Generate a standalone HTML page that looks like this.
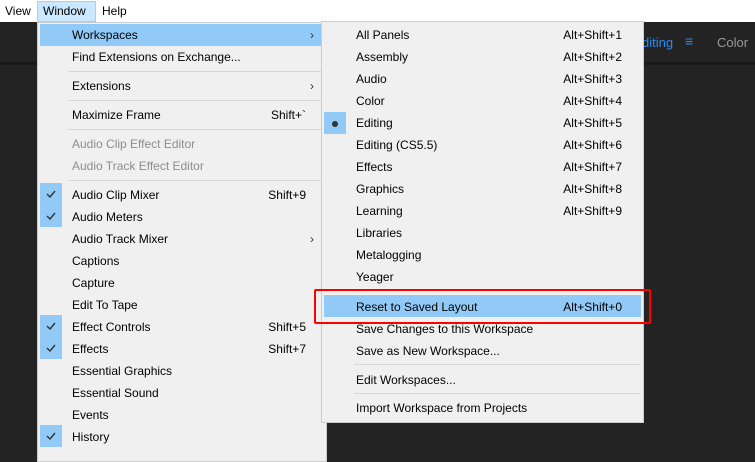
<!DOCTYPE html>
<html><head><style>
*{margin:0;padding:0;box-sizing:border-box}
body{width:755px;height:450px;overflow:hidden;background:#232323;position:relative;font-family:"Liberation Sans",sans-serif;font-size:12px;color:#000}
.bar{position:absolute;left:0;top:0;width:755px;height:22px;background:#fff}
.bar span{position:absolute;top:4px}
.win{position:absolute;left:37px;top:1px;width:59px;height:21px;background:#cce8ff;border:1px solid #99d1ff}
.line{position:absolute;left:0;top:62px;width:755px;height:3px;background:#191919}
.menu{position:absolute;background:#f0f0f0;border:1px solid #ccc}
.it{position:absolute;height:22px;line-height:22px;white-space:nowrap}
.hl{position:absolute;background:#91c9f7}
.sep{position:absolute;height:1px;background:#d7d7d7}
.dis{color:#8d8d8d}
.sc{position:absolute;text-align:right;height:22px;line-height:22px}
.arr{position:absolute;font-size:12px;color:#333}
.chk{position:absolute;left:2px;width:22px;height:22px;background:#91c9f7}
.chk svg{position:absolute;left:6px;top:7px}
</style></head><body>
<div class="bar">
<div class="win"></div>
<span style="left:5px">View</span>
<span style="left:43px">Window</span>
<span style="left:102px">Help</span>
</div>
<div class="line"></div>
<div style="position:absolute;left:642px;top:35px;color:#2d8ceb;font-size:13px">diting</div>
<div style="position:absolute;left:685px;top:33px;color:#2d8ceb;font-size:14px">≡</div>
<div style="position:absolute;left:717px;top:35px;color:#9a9a9a;font-size:13px">Color</div>

<div class="menu" style="left:37px;top:22px;width:290px;height:440px">
<div class="hl" style="left:2px;top:1px;width:282px;height:22px"></div>
<div class="sep" style="left:30px;top:48px;width:254px"></div>
<div class="sep" style="left:30px;top:77px;width:254px"></div>
<div class="sep" style="left:30px;top:106px;width:254px"></div>
<div class="sep" style="left:30px;top:157px;width:254px"></div>
</div>

<div class="menu" style="left:321px;top:21px;width:323px;height:402px">
<div class="chk" style="top:90px"><svg width="10" height="10"><circle cx="5" cy="5" r="3" fill="#333"/></svg></div>
<div class="sep" style="left:32px;top:268px;width:286px"></div>
<div class="hl" style="left:2px;top:273px;width:317px;height:22px"></div>
<div class="sep" style="left:32px;top:342px;width:286px"></div>
<div class="sep" style="left:32px;top:371px;width:286px"></div>
</div>
<div style="position:absolute;left:314px;top:289px;width:337px;height:35px;border:2px solid #ff0000;border-radius:2px"></div>

<div style="position:absolute;left:0;top:1px;width:755px;height:450px">
<div class="it" style="left:72px;top:23px">Workspaces</div><div class="arr" style="left:310px;top:27px">&#x203A;</div>
<div class="it" style="left:72px;top:45px">Find Extensions on Exchange...</div>
<div class="it" style="left:72px;top:74px">Extensions</div><div class="arr" style="left:310px;top:78px">&#x203A;</div>
<div class="it" style="left:72px;top:103px">Maximize Frame</div><div class="sc" style="left:200px;width:106px;top:103px">Shift+`</div>
<div class="it dis" style="left:72px;top:132px">Audio Clip Effect Editor</div>
<div class="it dis" style="left:72px;top:154px">Audio Track Effect Editor</div>
<div class="chk" style="left:40px;top:182px"><svg width="10" height="8"><path d="M1 4 L4 7 L9 1" stroke="#333" stroke-width="1.4" fill="none"/></svg></div>
<div class="it" style="left:72px;top:183px">Audio Clip Mixer</div><div class="sc" style="left:200px;width:106px;top:183px">Shift+9</div>
<div class="chk" style="left:40px;top:204px"><svg width="10" height="8"><path d="M1 4 L4 7 L9 1" stroke="#333" stroke-width="1.4" fill="none"/></svg></div>
<div class="it" style="left:72px;top:205px">Audio Meters</div>
<div class="it" style="left:72px;top:227px">Audio Track Mixer</div><div class="arr" style="left:310px;top:231px">&#x203A;</div>
<div class="it" style="left:72px;top:249px">Captions</div>
<div class="it" style="left:72px;top:271px">Capture</div>
<div class="it" style="left:72px;top:293px">Edit To Tape</div>
<div class="chk" style="left:40px;top:314px"><svg width="10" height="8"><path d="M1 4 L4 7 L9 1" stroke="#333" stroke-width="1.4" fill="none"/></svg></div>
<div class="it" style="left:72px;top:315px">Effect Controls</div><div class="sc" style="left:200px;width:106px;top:315px">Shift+5</div>
<div class="chk" style="left:40px;top:336px"><svg width="10" height="8"><path d="M1 4 L4 7 L9 1" stroke="#333" stroke-width="1.4" fill="none"/></svg></div>
<div class="it" style="left:72px;top:337px">Effects</div><div class="sc" style="left:200px;width:106px;top:337px">Shift+7</div>
<div class="it" style="left:72px;top:359px">Essential Graphics</div>
<div class="it" style="left:72px;top:381px">Essential Sound</div>
<div class="it" style="left:72px;top:403px">Events</div>
<div class="chk" style="left:40px;top:424px"><svg width="10" height="8"><path d="M1 4 L4 7 L9 1" stroke="#333" stroke-width="1.4" fill="none"/></svg></div>
<div class="it" style="left:72px;top:425px">History</div>
<div class="it" style="left:356px;top:23px">All Panels</div><div class="sc" style="left:500px;width:122px;top:23px">Alt+Shift+1</div>
<div class="it" style="left:356px;top:45px">Assembly</div><div class="sc" style="left:500px;width:122px;top:45px">Alt+Shift+2</div>
<div class="it" style="left:356px;top:67px">Audio</div><div class="sc" style="left:500px;width:122px;top:67px">Alt+Shift+3</div>
<div class="it" style="left:356px;top:89px">Color</div><div class="sc" style="left:500px;width:122px;top:89px">Alt+Shift+4</div>
<div class="it" style="left:356px;top:111px">Editing</div><div class="sc" style="left:500px;width:122px;top:111px">Alt+Shift+5</div>
<div class="it" style="left:356px;top:133px">Editing (CS5.5)</div><div class="sc" style="left:500px;width:122px;top:133px">Alt+Shift+6</div>
<div class="it" style="left:356px;top:155px">Effects</div><div class="sc" style="left:500px;width:122px;top:155px">Alt+Shift+7</div>
<div class="it" style="left:356px;top:177px">Graphics</div><div class="sc" style="left:500px;width:122px;top:177px">Alt+Shift+8</div>
<div class="it" style="left:356px;top:199px">Learning</div><div class="sc" style="left:500px;width:122px;top:199px">Alt+Shift+9</div>
<div class="it" style="left:356px;top:221px">Libraries</div>
<div class="it" style="left:356px;top:243px">Metalogging</div>
<div class="it" style="left:356px;top:265px">Yeager</div>
<div class="it" style="left:356px;top:295px">Reset to Saved Layout</div><div class="sc" style="left:500px;width:122px;top:295px">Alt+Shift+0</div>
<div class="it" style="left:356px;top:317px">Save Changes to this Workspace</div>
<div class="it" style="left:356px;top:339px">Save as New Workspace...</div>
<div class="it" style="left:356px;top:368px">Edit Workspaces...</div>
<div class="it" style="left:356px;top:396px">Import Workspace from Projects</div>
</div>
</body></html>
